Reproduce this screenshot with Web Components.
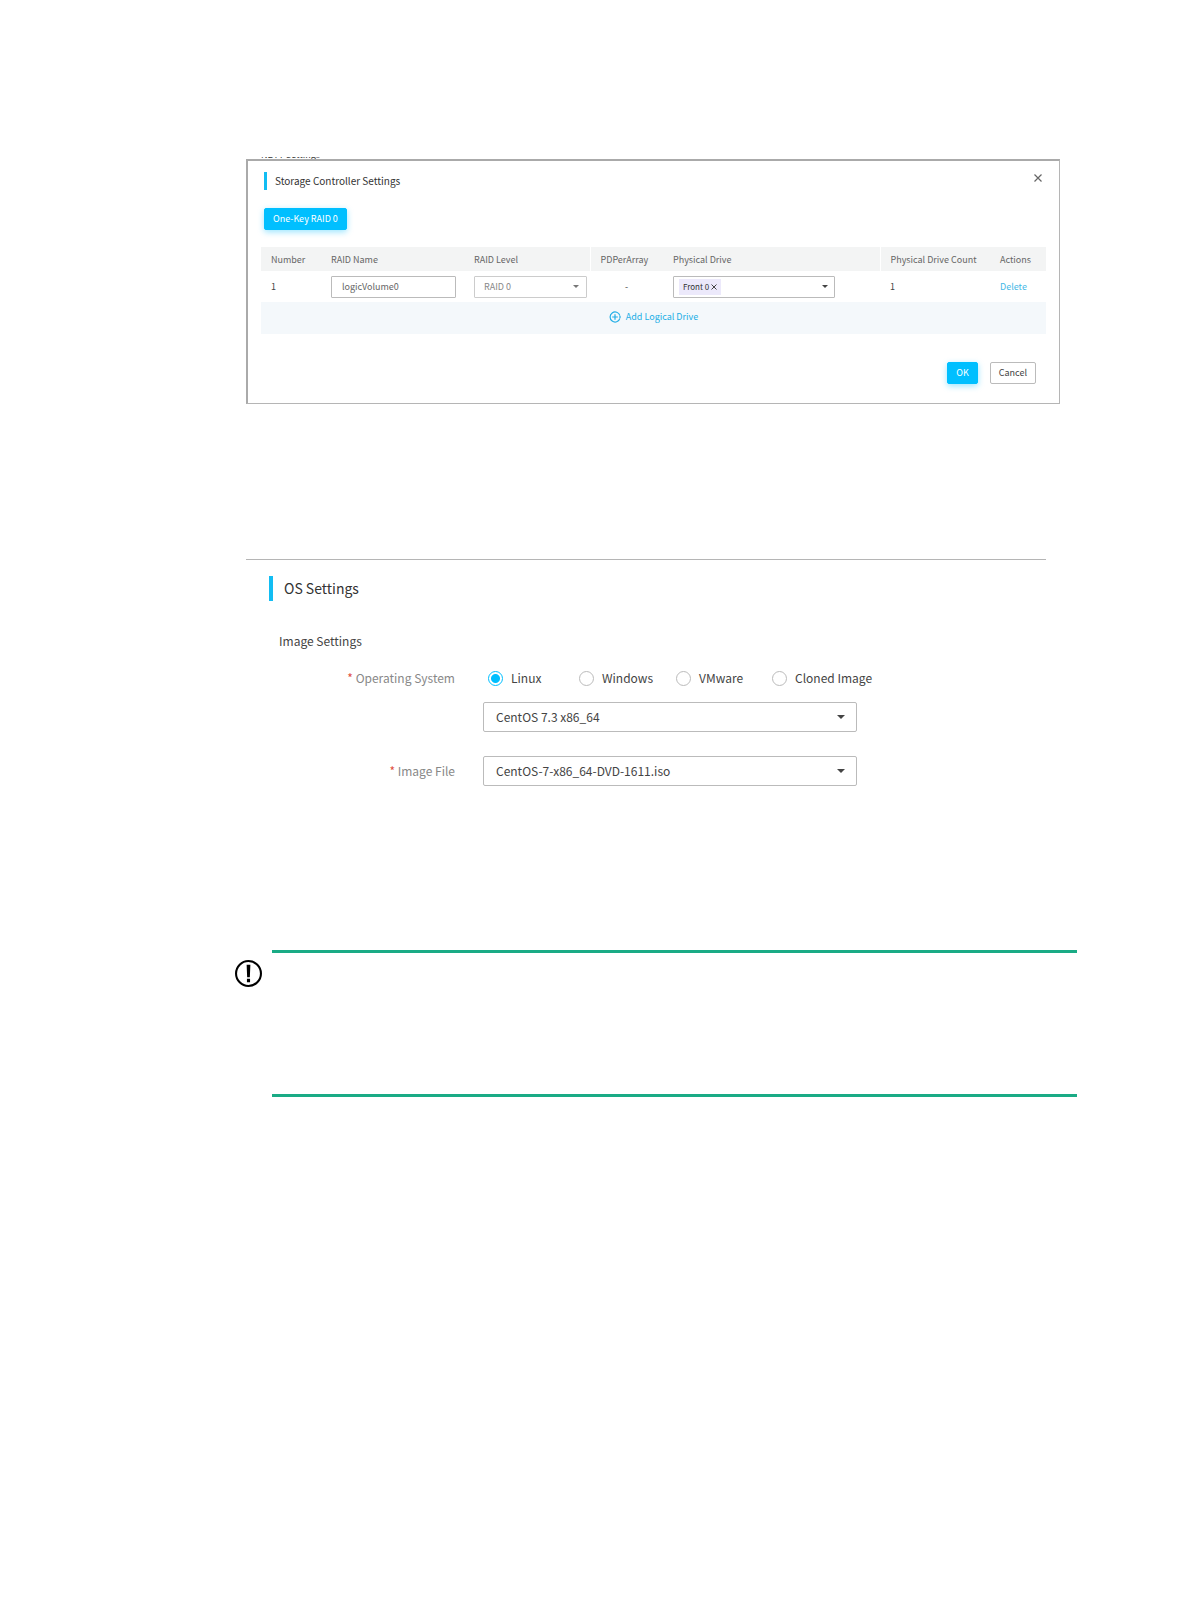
<!DOCTYPE html>
<html lang="en">
<head>
<meta charset="utf-8">
<title>Storage Controller Settings</title>
<style>
  body {
    margin: 0;
    background: #fff;
    color: #444;
    font-family: "Noto Sans CJK SC", "Open Sans", sans-serif;
    --accent: #00bfff;
    --line: #b5b5b5;
    --note: #1aab85;
  }

  main {
    padding: 157px 113px 0 235px;
  }

  storage-dialog {
    margin: 0 17px 0 11px;
  }

  os-settings {
    margin: 155px 31px 0 11px;
  }

  important-note {
    margin-top: 163px;
  }
</style>
</head>
<body>
<main>
  <storage-dialog>
    <span slot="behind">NBTT Settings</span>
    <section-title slot="title">Storage Controller Settings</section-title>
    <raid-table></raid-table>
  </storage-dialog>
  <os-settings></os-settings>
  <important-note></important-note>
</main>

<script>
const arrow = `<svg class="arrow" viewBox="0 0 8 4" width="8" height="4" aria-hidden="true"><path d="M0 0h8L4 4z" fill="currentColor"/></svg>`

class SectionTitle extends HTMLElement {
  constructor() {
    super();
  }
  connectedCallback() {
    const area = this.attachShadow({ mode: 'open' });
    area.innerHTML = `
        <style>
          :host {
            display: block;
          }

          h2 {
            margin: 0;
            padding-left: 8px;
            border-left: 3px solid #12bdf3;
            font-size: 10px;
            font-weight: 400;
            line-height: 18px;
            color: #333;
          }

          :host([large]) h2 {
            padding-left: 11px;
            border-left-width: 4px;
            font-size: 14px;
            line-height: 25px;
          }
        </style>
        <h2><slot></slot></h2>`
  }
}

class UiButton extends HTMLElement {
  constructor() {
    super();
  }
  connectedCallback() {
    const area = this.attachShadow({ mode: 'open' });
    area.innerHTML = `
        <style>
          :host {
            display: inline-flex;
          }

          button {
            box-sizing: border-box;
            height: 22px;
            margin: 0;
            padding: 0 8px;
            border: 1px solid #bbb;
            border-radius: 2px;
            background: #fff;
            color: #444;
            font: inherit;
            font-size: 9px;
            line-height: 20px;
          }

          :host([primary]) button {
            border-color: var(--accent);
            background: var(--accent);
            color: #fff;
            box-shadow: 0 2px 6px #00bfff66;
          }
        </style>
        <button type="button"><slot></slot></button>`
  }
}

class StorageDialog extends HTMLElement {
  constructor() {
    super();
  }
  connectedCallback() {
    const area = this.attachShadow({ mode: 'open' });
    area.innerHTML = `
        <style>
          :host {
            display: block;
          }

          /* last rows of the page title that the dialog covers */
          .behind {
            display: flex;
            align-items: flex-end;
            height: 2px;
            padding-left: 15px;
            overflow: hidden;
            font-size: 9px;
            line-height: 9px;
            color: #333;
          }

          .dialog {
            box-sizing: border-box;
            padding: 11px 13px 19px 13px;
            border: 1px solid var(--line);
            border-top: 2px solid #aaa;
            border-left: 2px solid #aaa;
          }

          header {
            display: flex;
            justify-content: space-between;
            align-items: flex-start;
            padding: 0 4px 0 3px;
          }

          .close {
            display: flex;
            margin: 0;
            padding: 2px 0;
            border: 0;
            background: none;
            color: #666;
          }

          .tools {
            display: flex;
            padding: 18px 3px 17px;
          }

          footer {
            display: flex;
            justify-content: flex-end;
            gap: 12px;
            padding: 28px 10px 0;
          }
        </style>
        <div class="behind"><slot name="behind"></slot></div>
        <section class="dialog">
          <header>
            <slot name="title"></slot>
            <button class="close" type="button" aria-label="Close">
              <svg viewBox="0 0 8 8" width="8" height="8"><path d="M.5 .5l7 7M7.5 .5l-7 7" fill="none" stroke="currentColor" stroke-width="1.2"/></svg>
            </button>
          </header>
          <div class="tools"><ui-button primary>One-Key RAID 0</ui-button></div>
          <slot></slot>
          <footer>
            <ui-button primary>OK</ui-button>
            <ui-button>Cancel</ui-button>
          </footer>
        </section>`
  }
}

class RaidTable extends HTMLElement {
  constructor() {
    super();
  }
  connectedCallback() {
    const area = this.attachShadow({ mode: 'open' });
    area.innerHTML = `
        <style>
          :host {
            display: block;
            font-size: 9px;
          }

          table {
            width: 100%;
            border-collapse: collapse;
            table-layout: fixed;
          }

          th, td {
            padding: 0 10px;
            text-align: left;
            font-weight: 400;
            white-space: nowrap;
          }

          th {
            height: 24px;
            background: #f3f4f4;
            color: #666;
          }

          th.split {
            border-right: 1px solid #fff;
          }

          td {
            height: 31px;
          }

          td.add {
            height: 32px;
            background: #f4f8fb;
            text-align: center;
          }

          .center {
            text-align: center;
          }

          input, select, .drives {
            box-sizing: border-box;
            display: block;
            height: 22px;
            margin: 0;
            border: 1px solid #bbb;
            border-radius: 1px;
            background: #fff;
            color: #666;
            font: inherit;
          }

          input {
            width: 125px;
            padding: 0 10px;
          }

          select {
            width: 100%;
            padding: 0 9px;
            border-color: #ccc;
            color: #888;
            appearance: none;
            opacity: 1;
          }

          .select {
            display: grid;
            width: 113px;
            align-items: center;
          }

          .select > * {
            grid-area: 1 / 1;
          }

          .arrow {
            width: 6px;
            height: 3px;
          }

          .select .arrow {
            justify-self: end;
            margin-right: 8px;
            color: #777;
            pointer-events: none;
          }

          .drives {
            display: flex;
            align-items: center;
            justify-content: space-between;
            width: 162px;
            padding: 0 5px;
          }

          .chip {
            display: flex;
            align-items: center;
            gap: 2px;
            height: 16px;
            padding: 0 4px;
            background: #ece9fb;
            color: #333;
            font-size: 8px;
            line-height: 16px;
          }

          button {
            display: inline-flex;
            align-items: center;
            margin: 0;
            padding: 0;
            border: 0;
            background: none;
            color: #444;
            font: inherit;
          }

          .drives > button {
            padding: 4px 1px;
          }

          .add button {
            gap: 5px;
            color: #22aee6;
          }

          a {
            color: #45b8e6;
            text-decoration: none;
          }
        </style>
        <table>
          <colgroup>
            <col style="width: 60px"><col style="width: 143px"><col style="width: 126px">
            <col style="width: 73px"><col><col style="width: 110px"><col style="width: 56px">
          </colgroup>
          <thead>
            <tr>
              <th>Number</th>
              <th>RAID Name</th>
              <th class="split">RAID Level</th>
              <th>PDPerArray</th>
              <th class="split">Physical Drive</th>
              <th>Physical Drive Count</th>
              <th>Actions</th>
            </tr>
          </thead>
          <tbody>
            <tr>
              <td>1</td>
              <td><input type="text" value="logicVolume0" aria-label="RAID Name"></td>
              <td>
                <div class="select">
                  <select aria-label="RAID Level" disabled><option>RAID 0</option></select>
                  ${arrow}
                </div>
              </td>
              <td class="center">-</td>
              <td>
                <div class="drives">
                  <span class="chip">Front 0
                    <button type="button" aria-label="Remove Front 0">
                      <svg viewBox="0 0 6 6" width="6" height="6"><path d="M.5 .5l5 5M5.5 .5l-5 5" fill="none" stroke="currentColor"/></svg>
                    </button>
                  </span>
                  <button type="button" aria-label="Physical Drive">${arrow}</button>
                </div>
              </td>
              <td>1</td>
              <td><a href="#">Delete</a></td>
            </tr>
            <tr>
              <td class="add" colspan="7">
                <button type="button">
                  <svg viewBox="0 0 12 12" width="12" height="12" fill="none" stroke="currentColor" stroke-width="1.2">
                    <path d="M10.9 4.6A5 5 0 1 0 10.9 7.4"/>
                    <path d="M3.2 6h5.6M6 3.2v5.6"/>
                    <path d="M11 5v2"/>
                  </svg>
                  Add Logical Drive
                </button>
              </td>
            </tr>
          </tbody>
        </table>`
  }
}

class OsSettings extends HTMLElement {
  constructor() {
    super();
  }
  connectedCallback() {
    const area = this.attachShadow({ mode: 'open' });
    const systems = ['Linux', 'Windows', 'VMware', 'Cloned Image']
    area.innerHTML = `
        <style>
          :host {
            display: block;
            border-top: 1px solid var(--line);
            font-size: 12px;
            line-height: 18px;
          }

          section-title {
            margin: 16px 0 0 23px;
          }

          h3 {
            margin: 31px 0 0 33px;
            font-size: 12px;
            font-weight: 400;
            color: #444;
          }

          form {
            display: grid;
            grid-template-columns: 209px 374px 1fr;
            column-gap: 28px;
            margin-top: 19px;
          }

          .label {
            grid-column: 1;
            text-align: right;
            color: #888;
          }

          .label::before {
            content: '* ';
            color: #e0513f;
          }

          .radios {
            grid-column: 2 / 4;
            display: grid;
            grid-template-columns: 91px 97px 96px auto;
            justify-content: start;
            padding-left: 5px;
          }

          .radios label {
            display: flex;
            align-items: center;
            gap: 8px;
            white-space: nowrap;
          }

          input {
            box-sizing: border-box;
            width: 15px;
            height: 15px;
            margin: 0;
            border: 1px solid #bbb;
            border-radius: 50%;
            appearance: none;
          }

          input:checked {
            border-color: var(--accent);
            background: radial-gradient(circle, var(--accent) 4px, transparent 5px);
          }

          .select {
            grid-column: 2;
            display: grid;
            align-items: center;
            margin-top: 15px;
          }

          .select > * {
            grid-area: 1 / 1;
          }

          .file {
            margin-top: 23px;
          }

          .label.file {
            line-height: 32px;
          }

          select {
            box-sizing: border-box;
            width: 100%;
            height: 30px;
            margin: 0;
            padding: 0 12px;
            border: 1px solid #bbb;
            border-radius: 2px;
            background: #fff;
            color: #444;
            font: inherit;
            appearance: none;
          }

          .arrow {
            justify-self: end;
            margin-right: 12px;
            pointer-events: none;
          }
        </style>
        <section-title large>OS Settings</section-title>
        <h3>Image Settings</h3>
        <form>
          <span class="label" id="os">Operating System</span>
          <div class="radios" role="radiogroup" aria-labelledby="os">
            ${systems.map((name, i) => `<label><input type="radio" name="system"${i === 0 ? ' checked' : ''}>${name}</label>`).join('')}
          </div>
          <div class="select">
            <select aria-label="Version"><option>CentOS 7.3 x86_64</option></select>
            ${arrow}
          </div>
          <label class="label file" for="image">Image File</label>
          <div class="select file">
            <select id="image"><option>CentOS-7-x86_64-DVD-1611.iso</option></select>
            ${arrow}
          </div>
        </form>`
  }
}

class ImportantNote extends HTMLElement {
  constructor() {
    super();
  }
  connectedCallback() {
    const area = this.attachShadow({ mode: 'open' });
    area.innerHTML = `
        <style>
          :host {
            display: grid;
            grid-template-columns: 27px 1fr;
            column-gap: 10px;
          }

          svg {
            margin-top: 10px;
          }

          .body {
            box-sizing: border-box;
            min-height: 147px;
            border: solid var(--note);
            border-width: 3px 0;
          }
        </style>
        <svg viewBox="0 0 26 26" width="27" height="27" role="img" aria-label="Important">
          <circle cx="13" cy="13" r="12" fill="none" stroke="#000" stroke-width="2"/>
          <path d="M11.2 4.5h3.6l-.5 12h-2.6zM11.5 18h3v3.5h-3z"/>
        </svg>
        <div class="body"><slot></slot></div>`
  }
}

customElements.define("section-title", SectionTitle);
customElements.define("ui-button", UiButton);
customElements.define("raid-table", RaidTable);
customElements.define("storage-dialog", StorageDialog);
customElements.define("os-settings", OsSettings);
customElements.define("important-note", ImportantNote);
</script>
</body>
</html>
